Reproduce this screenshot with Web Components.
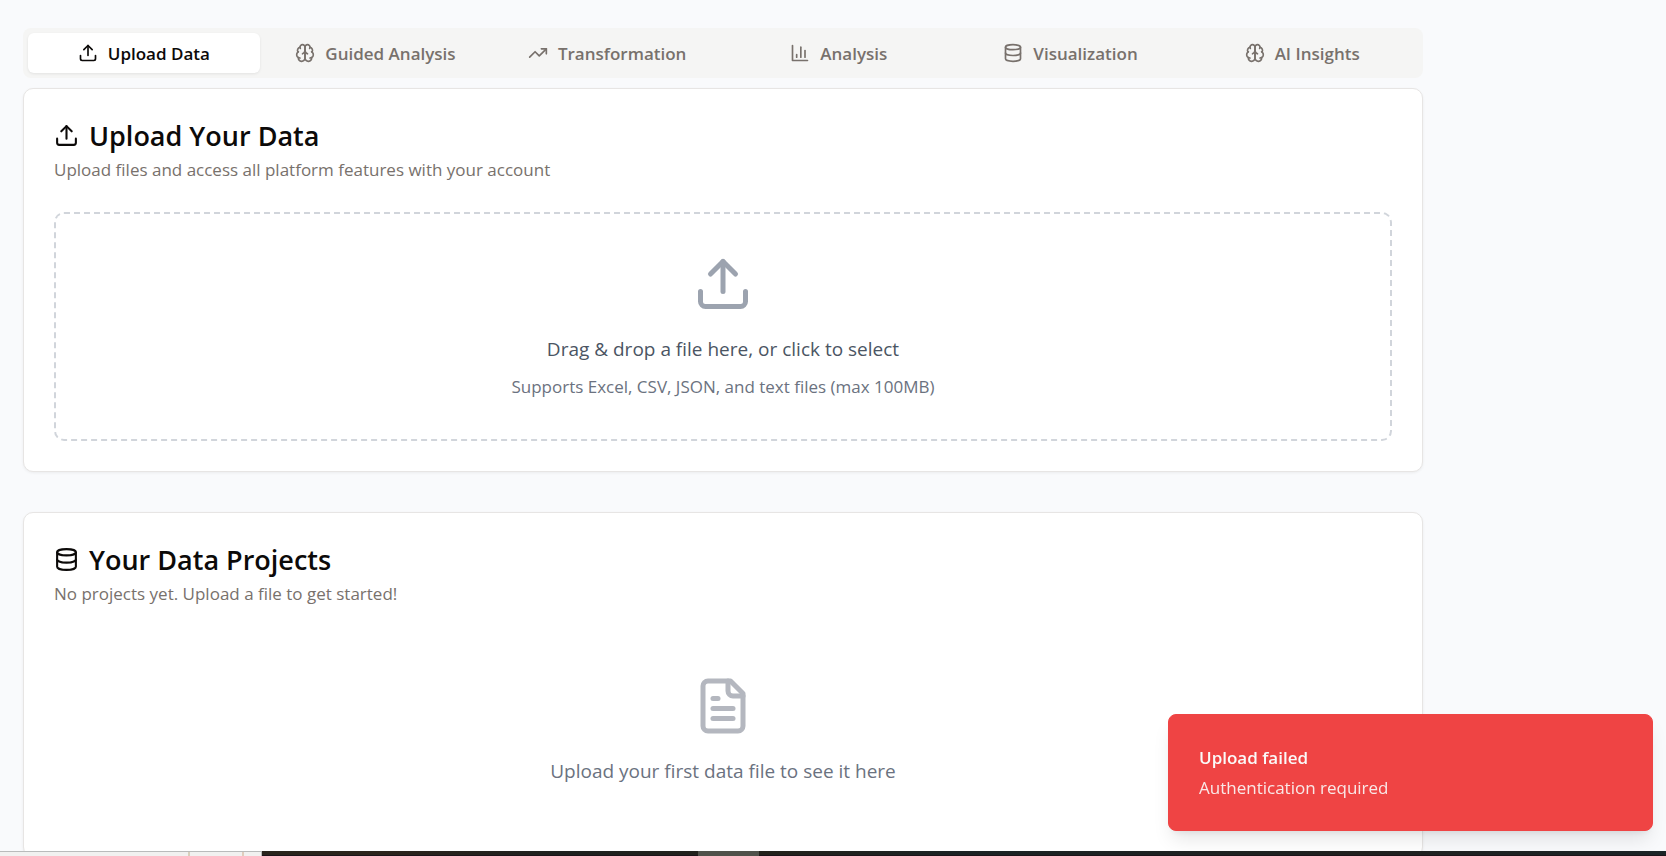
<!DOCTYPE html>
<html lang="en">
<head>
<meta charset="utf-8">
<meta name="viewport" content="width=device-width, initial-scale=1">
<title>Data Platform</title>
<style>
  html { scrollbar-width: none; }
  body {
    margin: 0;
    min-height: 100vh;
    background: #f9fafc;
    color: #0c0a09;
    font-family: "Open Sans", "Noto Sans", sans-serif;
    font-size: 17px;
    line-height: 25px;
  }
</style>
</head>
<body>
<data-workspace></data-workspace>
<toast-message heading="Upload failed">Authentication required</toast-message>
<desktop-edge></desktop-edge>

<script>
const ICONS = {
  upload: '<path d="M21 15v4a2 2 0 0 1-2 2H5a2 2 0 0 1-2-2v-4"/><path d="m17 8-5-5-5 5"/><path d="M12 3v12"/>',
  brain: '<path d="M12 5a3 3 0 1 0-5.997.125 4 4 0 0 0-2.526 5.77 4 4 0 0 0 .556 6.588A4 4 0 1 0 12 18Z"/><path d="M12 5a3 3 0 1 1 5.997.125 4 4 0 0 1 2.526 5.77 4 4 0 0 1-.556 6.588A4 4 0 1 1 12 18Z"/><path d="M15 13a4.5 4.5 0 0 1-3-4 4.5 4.5 0 0 1-3 4"/><path d="M17.599 6.5a3 3 0 0 0 .399-1.375"/><path d="M6.003 5.125A3 3 0 0 0 6.401 6.5"/><path d="M3.477 10.896a4 4 0 0 1 .585-.396"/><path d="M19.938 10.5a4 4 0 0 1 .585.396"/><path d="M6 18a4 4 0 0 1-1.967-.516"/><path d="M19.967 17.484A4 4 0 0 1 18 18"/>',
  trend: '<path d="m22 7-8.5 8.5-5-5L2 17"/><path d="M16 7h6v6"/>',
  chart: '<path d="M3 3v18h18"/><path d="M18 17V9"/><path d="M13 17V5"/><path d="M8 17v-3"/>',
  database: '<ellipse cx="12" cy="5" rx="9" ry="3"/><path d="M3 5v14a9 3 0 0 0 18 0V5"/><path d="M3 12a9 3 0 0 0 18 0"/>',
  file: '<path d="M15 2H6a2 2 0 0 0-2 2v16a2 2 0 0 0 2 2h12a2 2 0 0 0 2-2V7Z"/><path d="M14 2v4a2 2 0 0 0 2 2h4"/><path d="M10 9H8"/><path d="M16 13H8"/><path d="M16 17H8"/>'
};

class LineIcon extends HTMLElement {
  connectedCallback() {
    if (this.shadowRoot) return;
    this.attachShadow({ mode: 'open' }).innerHTML = `
      <style>
        :host { display: block; flex: none; width: var(--icon-size, 20px); height: var(--icon-size, 20px); }
        svg { display: block; width: 100%; height: 100%; fill: none; stroke: currentColor; stroke-width: 2; stroke-linecap: round; stroke-linejoin: round; }
      </style>
      <svg viewBox="0 0 24 24" aria-hidden="true">${ICONS[this.getAttribute('name')]}</svg>`;
  }
}
customElements.define('line-icon', LineIcon);

class TabBar extends HTMLElement {
  connectedCallback() {
    if (this.shadowRoot) return;
    const tabs = [
      ['upload', 'Upload Data'], ['brain', 'Guided Analysis'], ['trend', 'Transformation'],
      ['chart', 'Analysis'], ['database', 'Visualization'], ['brain', 'AI Insights']
    ];
    this.attachShadow({ mode: 'open' }).innerHTML = `
      <style>
        :host { display: block; }
        nav { display: grid; grid-template-columns: repeat(6, 1fr); padding: 5px; border-radius: 8px; background: #f5f5f4; }
        button {
          display: flex; align-items: center; justify-content: center; gap: 10px;
          height: 40px; padding: 0 10px; border: 0; border-radius: 6px; background: none;
          font: inherit; font-weight: 550; color: #78716c; white-space: nowrap; cursor: pointer;
        }
        button[aria-selected="true"] { background: #fff; color: #0c0a09; box-shadow: 0 1px 3px rgba(0, 0, 0, .08); }
      </style>
      <nav role="tablist">${tabs.map(([icon, label], i) =>
        `<button type="button" role="tab" aria-selected="${i === 0}"><line-icon name="${icon}"></line-icon><span>${label}</span></button>`).join('')}</nav>`;
    const buttons = [...this.shadowRoot.querySelectorAll('button')];
    buttons.forEach(b => b.addEventListener('click', () =>
      buttons.forEach(o => o.setAttribute('aria-selected', o === b))));
  }
}
customElements.define('tab-bar', TabBar);

class PanelCard extends HTMLElement {
  connectedCallback() {
    if (this.shadowRoot) return;
    this.attachShadow({ mode: 'open' }).innerHTML = `
      <style>
        :host { display: block; padding: 30px; border: 1px solid #e7e5e4; border-radius: 10px; background: #fff; box-shadow: 0 1px 3px rgba(0, 0, 0, .06); }
        header { display: grid; gap: 5px; margin-bottom: 30px; }
        h2 { display: flex; align-items: center; gap: 10px; margin: 0; font-size: 27px; line-height: 33px; font-weight: 550; --icon-size: 25px; }
        p { margin: 0; color: #78716c; }
      </style>
      <header>
        <h2><line-icon name="${this.getAttribute('icon')}"></line-icon><span>${this.getAttribute('heading')}</span></h2>
        <p>${this.getAttribute('description')}</p>
      </header>
      <slot></slot>`;
  }
}
customElements.define('panel-card', PanelCard);

class DropZone extends HTMLElement {
  connectedCallback() {
    if (this.shadowRoot) return;
    this.attachShadow({ mode: 'open' }).innerHTML = `
      <style>
        :host { display: block; }
        label { position: relative; display: flex; flex-direction: column; align-items: center; padding: 40px; border: 2px dashed #d1d5db; border-radius: 10px; text-align: center; cursor: pointer; }
        input { position: absolute; inset: 0; width: 100%; height: 100%; opacity: 0; cursor: pointer; }
        line-icon { --icon-size: 60px; margin-bottom: 20px; color: #9ca3af; }
        .lead { margin-bottom: 10px; font-size: 19px; line-height: 30px; color: #4b5563; }
        .note { color: #6b7280; }
      </style>
      <label>
        <input type="file" accept=".xlsx,.xls,.csv,.json,.txt">
        <line-icon name="upload"></line-icon>
        <span class="lead">Drag &amp; drop a file here, or click to select</span>
        <span class="note">Supports Excel, CSV, JSON, and text files (max 100MB)</span>
      </label>`;
  }
}
customElements.define('drop-zone', DropZone);

class EmptyState extends HTMLElement {
  connectedCallback() {
    if (this.shadowRoot) return;
    this.attachShadow({ mode: 'open' }).innerHTML = `
      <style>
        :host { display: flex; flex-direction: column; align-items: center; gap: 20px; padding: 40px 0; text-align: center; color: #6b7280; }
        line-icon { --icon-size: 60px; opacity: .5; }
        p { margin: 0; font-size: 19px; line-height: 30px; }
      </style>
      <line-icon name="file"></line-icon>
      <p><slot></slot></p>`;
  }
}
customElements.define('empty-state', EmptyState);

class DataWorkspace extends HTMLElement {
  connectedCallback() {
    if (this.shadowRoot) return;
    this.attachShadow({ mode: 'open' }).innerHTML = `
      <style>
        :host { display: block; padding: 28px 23px 0; }
        main { display: grid; gap: 40px; max-width: 1400px; }
        section { display: grid; gap: 10px; }
      </style>
      <main>
        <section>
          <tab-bar></tab-bar>
          <panel-card icon="upload" heading="Upload Your Data" description="Upload files and access all platform features with your account">
            <drop-zone></drop-zone>
          </panel-card>
        </section>
        <panel-card icon="database" heading="Your Data Projects" description="No projects yet. Upload a file to get started!">
          <empty-state>Upload your first data file to see it here</empty-state>
        </panel-card>
      </main>`;
  }
}
customElements.define('data-workspace', DataWorkspace);

class ToastMessage extends HTMLElement {
  connectedCallback() {
    if (this.shadowRoot) return;
    this.attachShadow({ mode: 'open' }).innerHTML = `
      <style>
        :host {
          position: fixed; right: 13px; bottom: 25px; box-sizing: border-box;
          width: 485px; max-width: calc(100vw - 26px); padding: 30px;
          display: grid; gap: 5px; border: 1px solid #ef4444; border-radius: 8px;
          background: #ef4444; color: #fafaf9;
          box-shadow: 0 12px 19px -4px rgba(0, 0, 0, .1), 0 5px 8px -5px rgba(0, 0, 0, .1);
        }
        strong { font-weight: 600; }
        div { opacity: .9; }
      </style>
      <strong>${this.getAttribute('heading')}</strong>
      <div><slot></slot></div>`;
    this.setAttribute('role', 'status');
  }
}
customElements.define('toast-message', ToastMessage);

/* The sliver of taskbar and wallpaper along the bottom of the window. */
class DesktopEdge extends HTMLElement {
  connectedCallback() {
    if (this.shadowRoot) return;
    this.attachShadow({ mode: 'open' }).innerHTML = `
      <style>
        :host { position: fixed; left: 0; right: 0; bottom: 0; height: 5px; display: flex; }
        .bar {
          box-sizing: border-box; flex: none; width: 262px;
          border-top: 1px solid #b9bbbb; border-right: 1px solid #b9bbbb;
          background: linear-gradient(90deg, transparent 188px, #d8d0bc 188px 190px, transparent 190px 242px, #e0cdbd 242px 244px, transparent 244px), #f1f1f0;
        }
        .wall {
          flex: 1;
          background:
            linear-gradient(90deg, transparent 436px, #50524b 436px 497px, transparent 497px),
            linear-gradient(transparent 4px, #1c141a 4px),
            linear-gradient(90deg, #28241c, #2c241c 120px, #1e211f 300px, #23221b 500px, #1b2324 700px, #20211f 1100px, #1b2426);
        }
      </style>
      <div class="bar"></div><div class="wall"></div>`;
  }
}
customElements.define('desktop-edge', DesktopEdge);
</script>
</body>
</html>
